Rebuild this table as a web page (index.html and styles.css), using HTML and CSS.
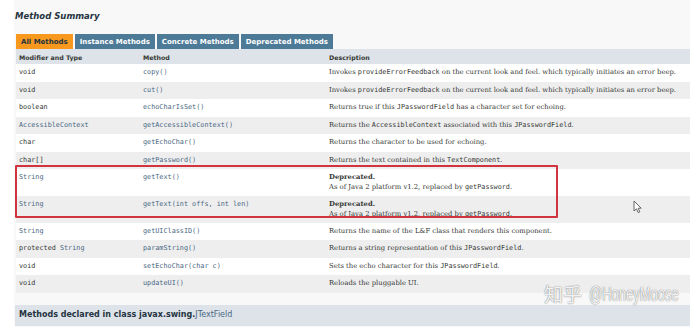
FILE: index.html
```html
<!DOCTYPE html>
<html>
<head>
<meta charset="utf-8">
<link rel="stylesheet" href="styles.css">
</head>
<body>
<div class="page">
  <h3 class="title">Method Summary</h3>
  <div class="tabs">
    <span class="tab active">All Methods</span>
    <span class="tab">Instance Methods</span>
    <span class="tab">Concrete Methods</span>
    <span class="tab">Deprecated Methods</span>
  </div>
  <div class="table">
    <div class="row head"><div class="c1">Modifier and Type</div><div class="c2">Method</div><div class="c3">Description</div></div>
    <div class="row"><div class="c1 code">void</div><div class="c2 code m">copy()</div><div class="c3 desc">Invokes <code>provideErrorFeedback</code> on the current look and feel. which typically initiates an error beep.</div></div>
    <div class="row alt"><div class="c1 code">void</div><div class="c2 code m">cut()</div><div class="c3 desc">Invokes <code>provideErrorFeedback</code> on the current look and feel. which typically initiates an error beep.</div></div>
    <div class="row"><div class="c1 code">boolean</div><div class="c2 code m">echoCharIsSet()</div><div class="c3 desc">Returns true if this <code>JPasswordField</code> has a character set for echoing.</div></div>
    <div class="row alt"><div class="c1 code link">AccessibleContext</div><div class="c2 code m">getAccessibleContext()</div><div class="c3 desc">Returns the <code>AccessibleContext</code> associated with this <code>JPasswordField</code>.</div></div>
    <div class="row"><div class="c1 code">char</div><div class="c2 code m">getEchoChar()</div><div class="c3 desc">Returns the character to be used for echoing.</div></div>
    <div class="row alt"><div class="c1 code">char[]</div><div class="c2 code m">getPassword()</div><div class="c3 desc">Returns the text contained in this <code>TextComponent</code>.</div></div>
    <div class="row"><div class="c1 code link">String</div><div class="c2 code m">getText()</div><div class="c3 desc"><b>Deprecated.</b><br>As of Java 2 platform v1.2, replaced by <code>getPassword</code>.</div></div>
    <div class="row alt"><div class="c1 code link">String</div><div class="c2 code m">getText(int&nbsp;offs, int&nbsp;len)</div><div class="c3 desc"><b>Deprecated.</b><br>As of Java 2 platform v1.2, replaced by <code>getPassword</code>.</div></div>
    <div class="row"><div class="c1 code link">String</div><div class="c2 code m">getUIClassID()</div><div class="c3 desc">Returns the name of the L&amp;F class that renders this component.</div></div>
    <div class="row alt"><div class="c1 code">protected <span class="link">String</span></div><div class="c2 code m">paramString()</div><div class="c3 desc">Returns a string representation of this <code>JPasswordField</code>.</div></div>
    <div class="row"><div class="c1 code">void</div><div class="c2 code m">setEchoChar(char&nbsp;c)</div><div class="c3 desc">Sets the echo character for this <code>JPasswordField</code>.</div></div>
    <div class="row alt"><div class="c1 code">void</div><div class="c2 code m">updateUI()</div><div class="c3 desc">Reloads the pluggable UI.</div></div>
  </div>
  <div class="declared">Methods declared in class javax.swing.<span class="dlink">JTextField</span></div>
  <div class="redbox"></div>
  <svg class="cursor" width="9" height="14" viewBox="0 0 9 14"><path d="M1 1 L1 11 L3.5 8.8 L5.2 12.6 L6.8 11.9 L5.2 8.2 L8.2 8.2 Z" fill="#fff" stroke="#555" stroke-width="0.9" stroke-linejoin="round"/></svg>
  <div class="watermark"><span class="wm-cn">知乎</span><span class="wm-en">@HoneyMoose</span></div>
</div>
</body>
</html>
```

FILE: styles.css
```css
html, body {
  margin: 0;
  padding: 0;
  background: #ffffff;
}
.page {
  position: relative;
  margin-left: 14px;
  height: 327px;
  background: #f8f8f8;
  overflow: hidden;
  font-family: "DejaVu Sans", sans-serif;
  color: #353833;
}
.title {
  margin: 0;
  padding: 11px 0 0 1px;
  font-size: 8.5px;
  font-weight: bold;
  font-style: italic;
  line-height: 10px;
  color: #253441;
  height: 23px;
}
.tabs {
  display: flex;
  gap: 2px;
  padding-left: 2px;
}
.tab {
  display: block;
  background: #4d7a97;
  color: #ffffff;
  font-size: 7px;
  font-weight: bold;
  line-height: 9px;
  padding: 4px 5px 2px;
}
.tab.active {
  background: #f8981d;
  color: #253441;
}
.table {
  margin-left: 2px;
  background: #fff;
}
.row {
  display: flex;
  background: #ffffff;
}
.row.alt {
  background: #eeeeef;
}
.row.head {
  background: #dee3e9;
  font-weight: bold;
  font-size: 6.3px;
  line-height: 9px;
  padding: 4px 0 2px;
}
.row.head .c1, .row.head .c2, .row.head .c3 { padding-top: 0; padding-bottom: 0; }
.c1, .c2, .c3 {
  padding: 4px 0 4px 0;
  line-height: 9.45px;
}
.c1 { width: 124px; padding-left: 3px; flex: none; }
.c2 { width: 186px; flex: none; }
.c3 { flex: 1; white-space: nowrap; }
.code, code {
  font-family: "DejaVu Sans Mono", monospace;
  font-size: 6.8px;
}
.link, .m {
  color: #4a6782;
}
.desc {
  font-family: "DejaVu Serif", serif;
  font-size: 6.8px;
}
.desc b { font-weight: bold; }
.declared {
  margin: 12px 0 0 1px;
  background: #dee3e9;
  font-size: 8px;
  font-weight: bold;
  line-height: 10px;
  padding: 5px 4px 6px;
  color: #253441;
}
.dlink { color: #4a6782; font-weight: normal; }
.redbox {
  position: absolute;
  left: 1px;
  top: 165px;
  width: 539px;
  height: 49px;
  border: 2px solid #d2343f;
  border-radius: 1px;
}
.cursor {
  position: absolute;
  left: 619px;
  top: 200px;
}
.watermark {
  position: absolute;
  left: 530px;
  top: 281px;
  display: flex;
  align-items: center;
  gap: 7px;
  white-space: nowrap;
  color: rgba(255,255,255,0.92);
  text-shadow: 0 0 1px rgba(0,0,0,0.45), 0 0 2px rgba(0,0,0,0.25);
  line-height: 26px;
}
.wm-cn {
  font-family: "Noto Sans CJK SC", sans-serif;
  font-size: 19px;
}
.wm-en {
  display: inline-block;
  font-family: "Liberation Sans", sans-serif;
  font-size: 20px;
  transform: scaleX(0.65);
  transform-origin: left center;
}
```
